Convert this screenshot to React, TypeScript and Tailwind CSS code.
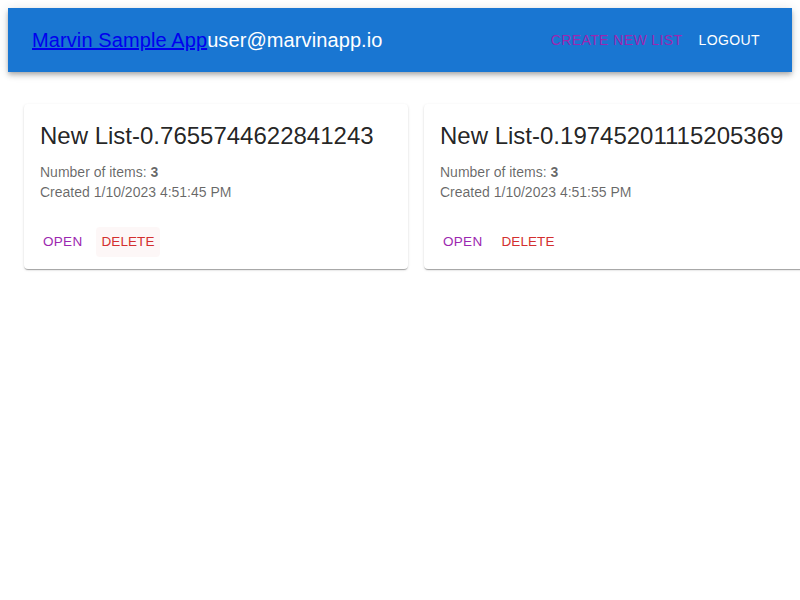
import React from "react";

const cards = [
  { title: "New List-0.7655744622841243", created: "1/10/2023 4:51:45 PM", hover: true },
  { title: "New List-0.19745201115205369", created: "1/10/2023 4:51:55 PM", hover: false },
];

export default function App() {
  return (
    <div
      className="w-[800px] h-[600px] overflow-hidden bg-white p-2"
      style={{ fontFamily: '"Liberation Sans", Arial, Helvetica, sans-serif' }}
    >
      <header className="h-16 bg-[#1976d2] flex items-center pl-6 pr-6 text-white shadow-[0px_2px_4px_-1px_rgba(0,0,0,0.2),0px_4px_5px_0px_rgba(0,0,0,0.14),0px_1px_10px_0px_rgba(0,0,0,0.12)]">
        <div className="flex-1 flex items-center text-[20px] leading-[1.6] tracking-[0.1px]">
          <a href="#" className="text-[#0000ee] underline">Marvin Sample App</a>
          <span>user@marvinapp.io</span>
        </div>
        <div className="flex items-center">
          <button className="px-2 py-[6px] text-[14px] leading-[1.75] tracking-[0.4px] uppercase text-[#9c27b0]">
            Create new list
          </button>
          <button className="px-2 py-[6px] text-[14px] leading-[1.75] tracking-[0.4px] uppercase text-white">
            Logout
          </button>
        </div>
      </header>
      <div className="flex gap-4 pl-4 pt-8">
        {cards.map((c) => (
          <div
            key={c.title}
            className="w-[384px] shrink-0 bg-white rounded shadow-[0px_2px_1px_-1px_rgba(0,0,0,0.2),0px_1px_1px_0px_rgba(0,0,0,0.14),0px_1px_3px_0px_rgba(0,0,0,0.12)]"
          >
            <div className="px-4 pt-4 pb-[17px]">
              <div className="text-[24px] leading-[32px] text-[rgba(0,0,0,0.87)] mb-[10px] whitespace-nowrap">
                {c.title}
              </div>
              <div className="text-[14px] leading-[20px] text-[rgba(0,0,0,0.6)]">
                Number of items: <b>3</b>
              </div>
              <div className="text-[14px] leading-[20px] text-[rgba(0,0,0,0.6)]">
                Created {c.created}
              </div>
            </div>
            <div className="flex items-center gap-2 px-2 pt-2 pb-3">
              <button className="h-[30px] w-[56px] pl-[11px] text-left rounded text-[13.5px] tracking-[0.3px] uppercase text-[#9c27b0]">
                Open
              </button>
              <button
                className={
                  "h-[30px] min-w-[64px] px-[5px] rounded text-[13.5px] tracking-[0.1px] uppercase text-[#d32f2f] " +
                  (c.hover ? "bg-[rgba(211,47,47,0.04)]" : "")
                }
              >
                Delete
              </button>
            </div>
          </div>
        ))}
      </div>
    </div>
  );
}
